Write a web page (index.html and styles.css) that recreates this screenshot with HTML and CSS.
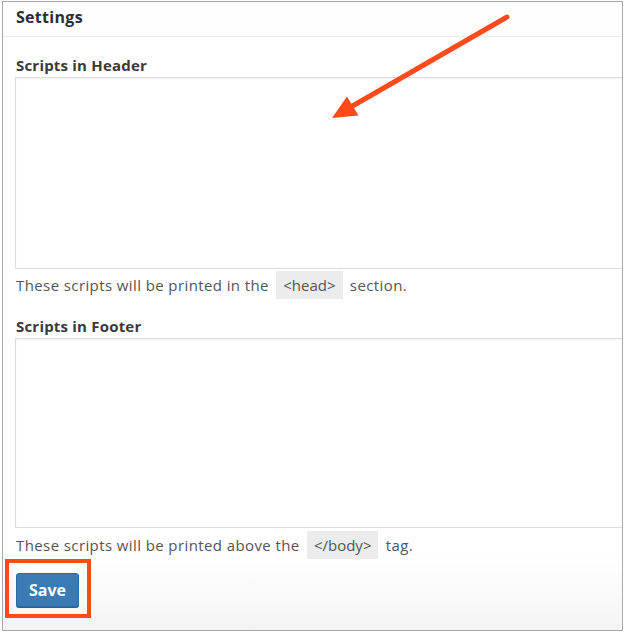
FILE: index.html
```html
<!DOCTYPE html>
<html lang="en">
<head>
<meta charset="UTF-8">
<meta name="viewport" content="width=device-width, initial-scale=1.0">
<title>Settings</title>
<link rel="stylesheet" href="styles.css">
</head>
<body>
<div class="panel">
    <div class="panel-head">
        <h2>Settings</h2>
    </div>
    <div class="panel-body">
        <label class="field-label" for="headerScripts">Scripts in Header</label>
        <textarea id="headerScripts" class="script-box header-box"></textarea>
        <p class="help">These scripts will be printed in the <code>&lt;head&gt;</code> section.</p>

        <label class="field-label" for="footerScripts">Scripts in Footer</label>
        <textarea id="footerScripts" class="script-box footer-box"></textarea>
        <p class="help help-last">These scripts will be printed above the <code>&lt;/body&gt;</code> tag.</p>

        <button class="save-btn">Save</button>
    </div>

    <!-- annotations drawn over the screenshot -->
    <svg class="arrow" width="625" height="140" viewBox="0 0 625 140">
        <line x1="507" y1="17" x2="349" y2="108" stroke="#fd4a1b" stroke-width="5" stroke-linecap="round"/>
        <polygon points="332,118 347,96.5 358.5,115.5" fill="#fd4a1b"/>
    </svg>
    <div class="highlight"></div>
</div>
</body>
</html>
```

FILE: styles.css
```css
body {
    margin: 0;
    padding: 0;
    font-family: "Open Sans", "Liberation Sans", sans-serif;
    background-color: #fff;
    color: #555;
}

.panel {
    position: relative;
    width: 619px;
    height: 628px;
    margin: 1px 0 0 2px;
    border: 1px solid #a9a9a9;
    overflow: hidden;
    background: linear-gradient(to bottom, #fff 88%, #f4f4f4 100%);
}

.panel-head {
    box-sizing: border-box;
    height: 35px;
    display: flex;
    align-items: center;
    padding: 0 0 4px 13px;
    border-bottom: 1px solid #ececec;
    background-color: #fefefe;
}

.panel-head h2 {
    margin: 0;
    font-size: 16px;
    font-weight: 700;
    letter-spacing: 0.3px;
    color: #2b2f33;
}

.panel-body {
    padding: 18px 0 0 12px;
}

.field-label {
    display: block;
    height: 20px;
    line-height: 20px;
    padding-left: 1px;
    font-size: 15px;
    font-weight: 700;
    letter-spacing: 0.2px;
    color: #3a3a3a;
    margin-bottom: 2px;
}

.script-box {
    box-sizing: border-box;
    display: block;
    width: 640px;
    margin: 0;
    border: 1px solid #dcdcdc;
    box-shadow: inset 0 1px 2px rgba(0, 0, 0, 0.05);
    resize: none;
    background-color: #fff;
}

.header-box {
    height: 192px;
}

.footer-box {
    height: 190px;
}

.help {
    margin: 4px 0 18px 1px;
    font-size: 15px;
    letter-spacing: 0.4px;
    line-height: 25px;
    color: #555;
}

.help-last {
    margin-top: 5px;
    margin-bottom: 15px;
}

code {
    font-family: "Open Sans", "Liberation Sans", sans-serif;
    font-size: 15px;
    letter-spacing: 0;
    background-color: #ececec;
    color: #555;
    padding: 4px 7px;
    margin: 0 3px;
}

.save-btn {
    display: block;
    margin-left: 1px;
    width: 63px;
    height: 34px;
    padding: 0;
    font-family: "Open Sans", "Liberation Sans", sans-serif;
    font-size: 16px;
    font-weight: 700;
    color: #fff;
    background-color: #3a7ab5;
    border: 1px solid #2c6aa3;
    border-radius: 3px;
    box-shadow: 0 1px 0 #2a5f8f;
}

.arrow {
    position: absolute;
    left: -3px;
    top: -2px;
}

.highlight {
    position: absolute;
    left: 2px;
    top: 557px;
    width: 78px;
    height: 51px;
    border: 4px solid #fd4a1b;
}
```
